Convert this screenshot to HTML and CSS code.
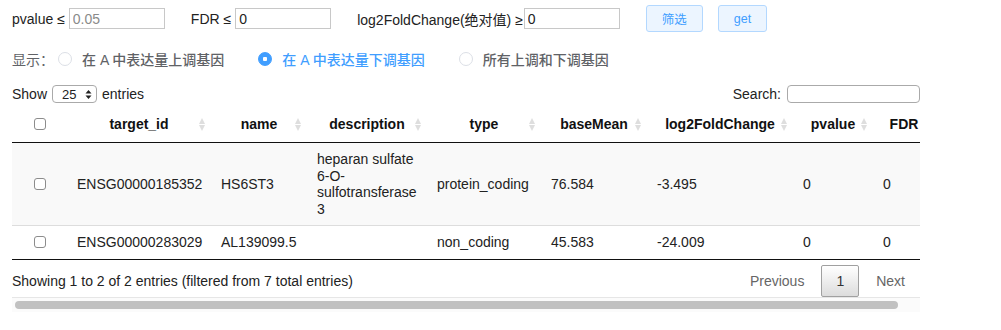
FILE: index.html
```html
<!DOCTYPE html>
<html lang="zh">

<head>
    <meta charset="utf-8">
    <meta name="viewport" content="width=device-width, initial-scale=1.0">
    <title>差异基因</title>
    <link rel="stylesheet" href="styles.css">
</head>

<body>

    <div class="filters">
        <label class="field">pvalue ≤ <input type="text" placeholder="0.05"></label>
        <label class="field">FDR ≤ <input type="text" value="0"></label>
        <label class="field">log2FoldChange(绝对值) ≥ <input type="text" value="0"></label>
        <button class="btn">筛选</button>
        <button class="btn">get</button>
    </div>

    <div class="display">
        <span class="display-label">显示：</span>
        <label class="radio"><input type="radio" name="show"> 在 A 中表达量上调基因</label>
        <label class="radio checked"><input type="radio" name="show" checked> 在 A 中表达量下调基因</label>
        <label class="radio"><input type="radio" name="show"> 所有上调和下调基因</label>
    </div>

    <div class="wrapper">
        <div class="controls">
            <div class="length">
                Show
                <span class="select">25
                    <svg width="7" height="11" viewBox="0 0 7 11">
                        <path d="M3.5 1 L6.5 4.5 L0.5 4.5 Z M3.5 10 L6.5 6.5 L0.5 6.5 Z" fill="#222"/>
                    </svg>
                </span>
                entries
            </div>
            <label class="search">Search: <input type="text"></label>
        </div>

        <div class="scroller">
            <table>
                <colgroup>
                    <col class="c-check">
                    <col class="c-id">
                    <col class="c-name">
                    <col class="c-desc">
                    <col class="c-type">
                    <col class="c-mean">
                    <col class="c-fold">
                    <col class="c-p">
                    <col class="c-fdr">
                </colgroup>
                <thead>
                    <tr>
                        <th><input type="checkbox" class="check"></th>
                        <th class="sorting">target_id</th>
                        <th class="sorting">name</th>
                        <th class="sorting">description</th>
                        <th class="sorting">type</th>
                        <th class="sorting">baseMean</th>
                        <th class="sorting">log2FoldChange</th>
                        <th class="sorting">pvalue</th>
                        <th class="sorting">FDR</th>
                    </tr>
                </thead>
                <tbody>
                    <tr class="odd">
                        <td class="center"><input type="checkbox" class="check"></td>
                        <td>ENSG00000185352</td>
                        <td>HS6ST3</td>
                        <td>heparan sulfate 6-O-sulfotransferase 3</td>
                        <td>protein_coding</td>
                        <td>76.584</td>
                        <td>-3.495</td>
                        <td>0</td>
                        <td>0</td>
                    </tr>
                    <tr>
                        <td class="center"><input type="checkbox" class="check"></td>
                        <td>ENSG00000283029</td>
                        <td>AL139099.5</td>
                        <td></td>
                        <td>non_coding</td>
                        <td>45.583</td>
                        <td>-24.009</td>
                        <td>0</td>
                        <td>0</td>
                    </tr>
                </tbody>
            </table>
        </div>

        <div class="footer">
            <div class="info">Showing 1 to 2 of 2 entries (filtered from 7 total entries)</div>
            <div class="paging">
                <a class="page disabled">Previous</a>
                <a class="page current">1</a>
                <a class="page disabled">Next</a>
            </div>
        </div>

        <div class="scrollbar"><div class="thumb"></div></div>
    </div>

</body>
</html>
```

FILE: styles.css
```css
body {
    margin: 0;
    padding: 0 12px;
    font-family: "Liberation Sans", Arial, "Noto Sans CJK SC", sans-serif;
    font-size: 14px;
    color: #222;
}

input[type="text"] {
    box-sizing: border-box;
    font-family: inherit;
    font-size: 14px;
    outline: none;
}

/* filter row */

.filters {
    display: flex;
    align-items: center;
    height: 27px;
    padding-top: 5px;
}

.field {
    display: flex;
    align-items: center;
    gap: 4px;
    margin-right: 26px;
    white-space: nowrap;
}

.field input {
    width: 96px;
    height: 21px;
    padding: 0 3px;
    border: 1px solid #c8c8c8;
    border-radius: 0;
    color: #222;
}

.field input::placeholder {
    color: #8a8a8a;
}

.field:nth-child(3) {
    gap: 1px;
    margin-right: 26px;
}

.btn {
    height: 27px;
    padding: 0 15px;
    margin-right: 15px;
    border: 1px solid #b3d8ff;
    border-radius: 3px;
    background-color: #ecf5ff;
    color: #409eff;
    font-family: inherit;
    font-size: 12.5px;
}

/* display radios */

.display {
    display: flex;
    align-items: center;
    height: 20px;
    margin-top: 17px;
    color: #606266;
}

.display-label {
    margin-right: 4px;
}

.radio {
    display: flex;
    align-items: center;
    gap: 10px;
    margin-right: 34px;
    font-weight: 500;
}

.radio input {
    appearance: none;
    box-sizing: border-box;
    width: 14px;
    height: 14px;
    margin: 0;
    border: 1px solid #dcdfe6;
    border-radius: 50%;
    background-color: #fff;
}

.radio input:checked {
    border-color: #409eff;
    background: radial-gradient(circle, #fff 0, #fff 2px, #409eff 2.5px);
}

.checked {
    color: #409eff;
}

/* datatable */

.wrapper {
    width: 908px;
}

.controls {
    display: flex;
    justify-content: space-between;
    align-items: center;
    height: 18px;
    margin-top: 16px;
}

.length {
    display: flex;
    align-items: center;
    gap: 5px;
}

.select {
    display: flex;
    align-items: center;
    justify-content: space-between;
    box-sizing: border-box;
    width: 45px;
    height: 18px;
    padding: 0 4px 0 9px;
    border: 1px solid #aaa;
    border-radius: 4px;
    font-size: 13px;
}

.search {
    display: flex;
    align-items: center;
    gap: 6px;
}

.search input {
    width: 133px;
    height: 18px;
    border: 1px solid #aaa;
    border-radius: 4px;
}

.scroller {
    overflow: hidden;
    margin-top: 3px;
}

table {
    width: 923px;
    table-layout: fixed;
    border-collapse: collapse;
    border-bottom: 1px solid #111;
}

.c-check { width: 55px; }
.c-id { width: 144px; }
.c-name { width: 96px; }
.c-desc { width: 120px; }
.c-type { width: 114px; }
.c-mean { width: 106px; }
.c-fold { width: 146px; }
.c-p { width: 80px; }
.c-fdr { width: 62px; }

th {
    position: relative;
    padding: 10px;
    line-height: 16px;
    text-align: center;
    font-weight: bold;
    color: #111;
    border-bottom: 1px solid #111;
    white-space: nowrap;
}

.sorting::before,
.sorting::after {
    content: "";
    position: absolute;
    right: 6px;
    border-left: 3.5px solid transparent;
    border-right: 3.5px solid transparent;
}

.sorting::before {
    top: 12px;
    border-bottom: 6px solid #dedede;
}

.sorting::after {
    top: 19px;
    border-top: 6px solid #dedede;
}

td {
    padding: 8px 10px;
    line-height: 16.5px;
    vertical-align: middle;
}

tbody tr + tr td {
    border-top: 1px solid #ddd;
}

.odd {
    background-color: #f9f9f9;
}

.center {
    text-align: center;
}

.check {
    appearance: none;
    box-sizing: border-box;
    display: block;
    width: 12px;
    height: 12px;
    margin: 0 auto;
    border: 1px solid #8c8c8c;
    border-radius: 3px;
    background-color: #fff;
}

/* footer */

.footer {
    display: flex;
    justify-content: space-between;
    align-items: center;
    padding-top: 5px;
}

.paging {
    display: flex;
    align-items: center;
}

.page {
    box-sizing: border-box;
    height: 32px;
    padding: 0 14px;
    margin-left: 2px;
    line-height: 30px;
    border: 1px solid transparent;
    border-radius: 2px;
    color: #666;
}

.current {
    border-color: #a0a0a0;
    background: linear-gradient(to bottom, #fff 0%, #dcdcdc 100%);
    color: #333;
}

.scrollbar {
    box-sizing: border-box;
    height: 15px;
    border-top: 1px solid #e6e6e6;
    background-color: #fbfbfb;
    padding: 3px 0 0 3px;
}

.thumb {
    width: 883px;
    height: 8px;
    border-radius: 4px;
    background-color: #c1c1c1;
}
```
